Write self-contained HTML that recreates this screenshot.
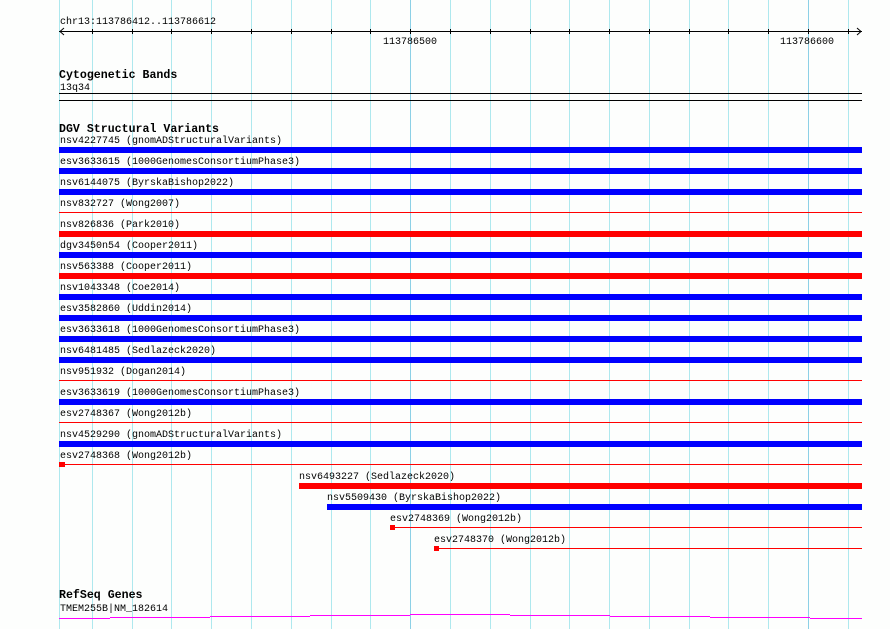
<!DOCTYPE html>
<html><head><meta charset="utf-8"><style>
html,body{margin:0;padding:0;background:#fdfefd;}
svg{display:block}
text{font-family:"Liberation Mono",monospace;font-size:10px;fill:#000}
.h{font-weight:bold;font-size:11.6px}
</style></head><body>
<svg width="890" height="629" viewBox="0 0 890 629" xmlns="http://www.w3.org/2000/svg">
<rect width="890" height="629" fill="#fdfefd"/>
<g stroke="#aee8ee" stroke-width="1">
<line x1="59.5" y1="0" x2="59.5" y2="629"/>
<line x1="92.5" y1="0" x2="92.5" y2="629"/>
<line x1="132.5" y1="0" x2="132.5" y2="629"/>
<line x1="171.5" y1="0" x2="171.5" y2="629"/>
<line x1="211.5" y1="0" x2="211.5" y2="629"/>
<line x1="251.5" y1="0" x2="251.5" y2="629"/>
<line x1="291.5" y1="0" x2="291.5" y2="629"/>
<line x1="331.5" y1="0" x2="331.5" y2="629"/>
<line x1="370.5" y1="0" x2="370.5" y2="629"/>
<line x1="450.5" y1="0" x2="450.5" y2="629"/>
<line x1="490.5" y1="0" x2="490.5" y2="629"/>
<line x1="530.5" y1="0" x2="530.5" y2="629"/>
<line x1="569.5" y1="0" x2="569.5" y2="629"/>
<line x1="609.5" y1="0" x2="609.5" y2="629"/>
<line x1="649.5" y1="0" x2="649.5" y2="629"/>
<line x1="689.5" y1="0" x2="689.5" y2="629"/>
<line x1="728.5" y1="0" x2="728.5" y2="629"/>
<line x1="768.5" y1="0" x2="768.5" y2="629"/>
<line x1="848.5" y1="0" x2="848.5" y2="629"/>
</g>
<g stroke="#8cd0e6" stroke-width="1">
<line x1="410.5" y1="0" x2="410.5" y2="629"/>
<line x1="808.5" y1="0" x2="808.5" y2="629"/>
</g>
<!-- axis -->
<text x="60" y="24">chr13:113786412..113786612</text>
<g stroke="#000" stroke-width="1" fill="none">
<line x1="59" y1="31.5" x2="862" y2="31.5"/>
<polyline points="64,28 60,31.5 64,35"/>
<polyline points="857,28 861,31.5 857,35"/>
<path d="M92.5 29v5M132.5 29v5M171.5 29v5M211.5 29v5M251.5 29v5M291.5 29v5M331.5 29v5M370.5 29v5M410.5 29v5M450.5 29v5M490.5 29v5M530.5 29v5M569.5 29v5M609.5 29v5M649.5 29v5M689.5 29v5M728.5 29v5M768.5 29v5M808.5 29v5M848.5 29v5"/>
<line x1="59" y1="93.5" x2="862" y2="93.5"/>
<line x1="59" y1="100.5" x2="862" y2="100.5"/>
</g>
<text x="383" y="44">113786500</text>
<text x="780" y="44">113786600</text>
<text class="h" x="59" y="78">Cytogenetic Bands</text>
<text x="60" y="90">13q34</text>
<text class="h" x="59" y="132">DGV Structural Variants</text>

<g>
<text x="60" y="143">nsv4227745 (gnomADStructuralVariants)</text><rect x="59" y="147" width="803" height="6" fill="#0000ff"/>
<text x="60" y="164">esv3633615 (1000GenomesConsortiumPhase3)</text><rect x="59" y="168" width="803" height="6" fill="#0000ff"/>
<text x="60" y="185">nsv6144075 (ByrskaBishop2022)</text><rect x="59" y="189" width="803" height="6" fill="#0000ff"/>
<text x="60" y="206">nsv832727 (Wong2007)</text><rect x="59" y="212" width="803" height="1" fill="#ff0000"/>
<text x="60" y="227">nsv826836 (Park2010)</text><rect x="59" y="231" width="803" height="6" fill="#ff0000"/>
<text x="60" y="248">dgv3450n54 (Cooper2011)</text><rect x="59" y="252" width="803" height="6" fill="#0000ff"/>
<text x="60" y="269">nsv563388 (Cooper2011)</text><rect x="59" y="273" width="803" height="6" fill="#ff0000"/>
<text x="60" y="290">nsv1043348 (Coe2014)</text><rect x="59" y="294" width="803" height="6" fill="#0000ff"/>
<text x="60" y="311">esv3582860 (Uddin2014)</text><rect x="59" y="315" width="803" height="6" fill="#0000ff"/>
<text x="60" y="332">esv3633618 (1000GenomesConsortiumPhase3)</text><rect x="59" y="336" width="803" height="6" fill="#0000ff"/>
<text x="60" y="353">nsv6481485 (Sedlazeck2020)</text><rect x="59" y="357" width="803" height="6" fill="#0000ff"/>
<text x="60" y="374">nsv951932 (Dogan2014)</text><rect x="59" y="380" width="803" height="1" fill="#ff0000"/>
<text x="60" y="395">esv3633619 (1000GenomesConsortiumPhase3)</text><rect x="59" y="399" width="803" height="6" fill="#0000ff"/>
<text x="60" y="416">esv2748367 (Wong2012b)</text><rect x="59" y="422" width="803" height="1" fill="#ff0000"/>
<text x="60" y="437">nsv4529290 (gnomADStructuralVariants)</text><rect x="59" y="441" width="803" height="6" fill="#0000ff"/>
<text x="60" y="458">esv2748368 (Wong2012b)</text><rect x="59" y="464" width="803" height="1" fill="#ff0000"/><rect x="59" y="462" width="6" height="5" fill="#ff0000"/>
<text x="299" y="479">nsv6493227 (Sedlazeck2020)</text><rect x="299" y="483" width="563" height="6" fill="#ff0000"/>
<text x="327" y="500">nsv5509430 (ByrskaBishop2022)</text><rect x="327" y="504" width="535" height="6" fill="#0000ff"/>
<text x="390" y="521">esv2748369 (Wong2012b)</text><rect x="390" y="527" width="472" height="1" fill="#ff0000"/><rect x="390" y="525" width="5" height="5" fill="#ff0000"/>
<text x="434" y="542">esv2748370 (Wong2012b)</text><rect x="434" y="548" width="428" height="1" fill="#ff0000"/><rect x="434" y="546" width="5" height="5" fill="#ff0000"/>
</g>

<text class="h" x="59" y="598">RefSeq Genes</text>
<text x="60" y="611">TMEM255B|NM_182614</text>
<g fill="#ff00ff">
<rect x="59" y="618" width="51" height="1"/>
<rect x="110" y="617" width="100" height="1"/>
<rect x="210" y="616" width="100" height="1"/>
<rect x="310" y="615" width="100" height="1"/>
<rect x="410" y="614" width="100" height="1"/>
<rect x="510" y="615" width="100" height="1"/>
<rect x="610" y="616" width="100" height="1"/>
<rect x="710" y="617" width="100" height="1"/>
<rect x="810" y="618" width="52" height="1"/>
</g>
</svg>
</body></html>
